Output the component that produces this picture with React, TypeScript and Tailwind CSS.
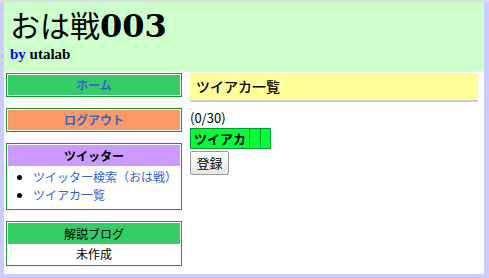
export default function App() {
  const jp = { fontFamily: '"Noto Sans CJK JP", "Noto Sans", sans-serif' };
  return (
    <div className="min-h-[278px] border-t-2 border-[#dddddd] bg-[#ccccff]" style={jp}>
      <div className="ml-[4px] w-[480px] bg-white pb-[8px]">
        <header className="h-[70px] bg-[#ccffcc] pl-[6px] pt-[4px]">
          <h1 className="flex items-baseline leading-[36px] text-black">
            <span className="text-[30px]" style={{ fontFamily: '"Noto Sans CJK JP", serif' }}>
              おは戦
            </span>
            <span className="text-[32px] font-bold" style={{ fontFamily: '"DejaVu Serif", serif' }}>
              003
            </span>
          </h1>
          <p
            className="mt-[1px] text-[15px] font-bold leading-[18px]"
            style={{ fontFamily: '"Liberation Serif", serif' }}
          >
            <span className="text-[#0000ff]">by</span> utalab
          </p>
        </header>
        <div className="flex gap-[8px] pl-[2px] pt-[1px]">
          <aside className="flex w-[176px] flex-col gap-[11px]">
            <div className="border border-[#119933] p-[1px]">
              <div className="h-[20px] bg-[#33cc66] text-center text-[12px] font-bold leading-[20px] text-[#3366cc]">
                ホーム
              </div>
            </div>
            <div className="border border-[#119933] p-[1px]">
              <div className="h-[20px] bg-[#ff9966] text-center text-[12px] font-bold leading-[20px] text-[#3366cc]">
                ログアウト
              </div>
            </div>
            <div className="border border-[#119933] p-[1px] pb-[5px]">
              <div className="h-[21px] bg-[#cc99ff] text-center text-[12px] font-bold leading-[21px] text-black">
                ツイッター
              </div>
              <ul className="mt-[2px] list-disc pl-[25px] text-[12px] leading-[18px] text-[#3366cc] marker:text-black">
                <li>ツイッター検索（おは戦）</li>
                <li>ツイアカ一覧</li>
              </ul>
            </div>
            <div className="border border-[#119933] p-[1px]">
              <div className="h-[21px] bg-[#33cc66] text-center text-[12px] leading-[21px] text-black">
                解説ブログ
              </div>
              <div className="h-[20px] text-center text-[12px] leading-[20px] text-black">未作成</div>
            </div>
          </aside>
          <main className="w-[288px]">
            <h2 className="h-[29px] border-b-2 border-[#cccccc] bg-[#ffff99] pl-[6px] text-[14px] font-medium leading-[27px] text-black">
              ツイアカ一覧
            </h2>
            <p className="mt-[7px] text-[13px] leading-[18px] text-black">(0/30)</p>
            <table className="mt-[1px] border-collapse border border-[#009933] text-[13px] leading-[17px]">
              <tbody>
                <tr className="bg-[#00ff33]">
                  <td className="border border-[#009933] px-[3px] py-[1px] font-bold">ツイアカ</td>
                  <td className="w-[11px] border border-[#009933]"></td>
                  <td className="w-[10px] border border-[#009933]"></td>
                </tr>
              </tbody>
            </table>
            <button className="h-[24px] w-[39px] rounded-[2px] border border-[#999999] bg-gradient-to-b from-white to-[#e6e6e6] text-[13px] text-black">
              登録
            </button>
          </main>
        </div>
      </div>
    </div>
  );
}
